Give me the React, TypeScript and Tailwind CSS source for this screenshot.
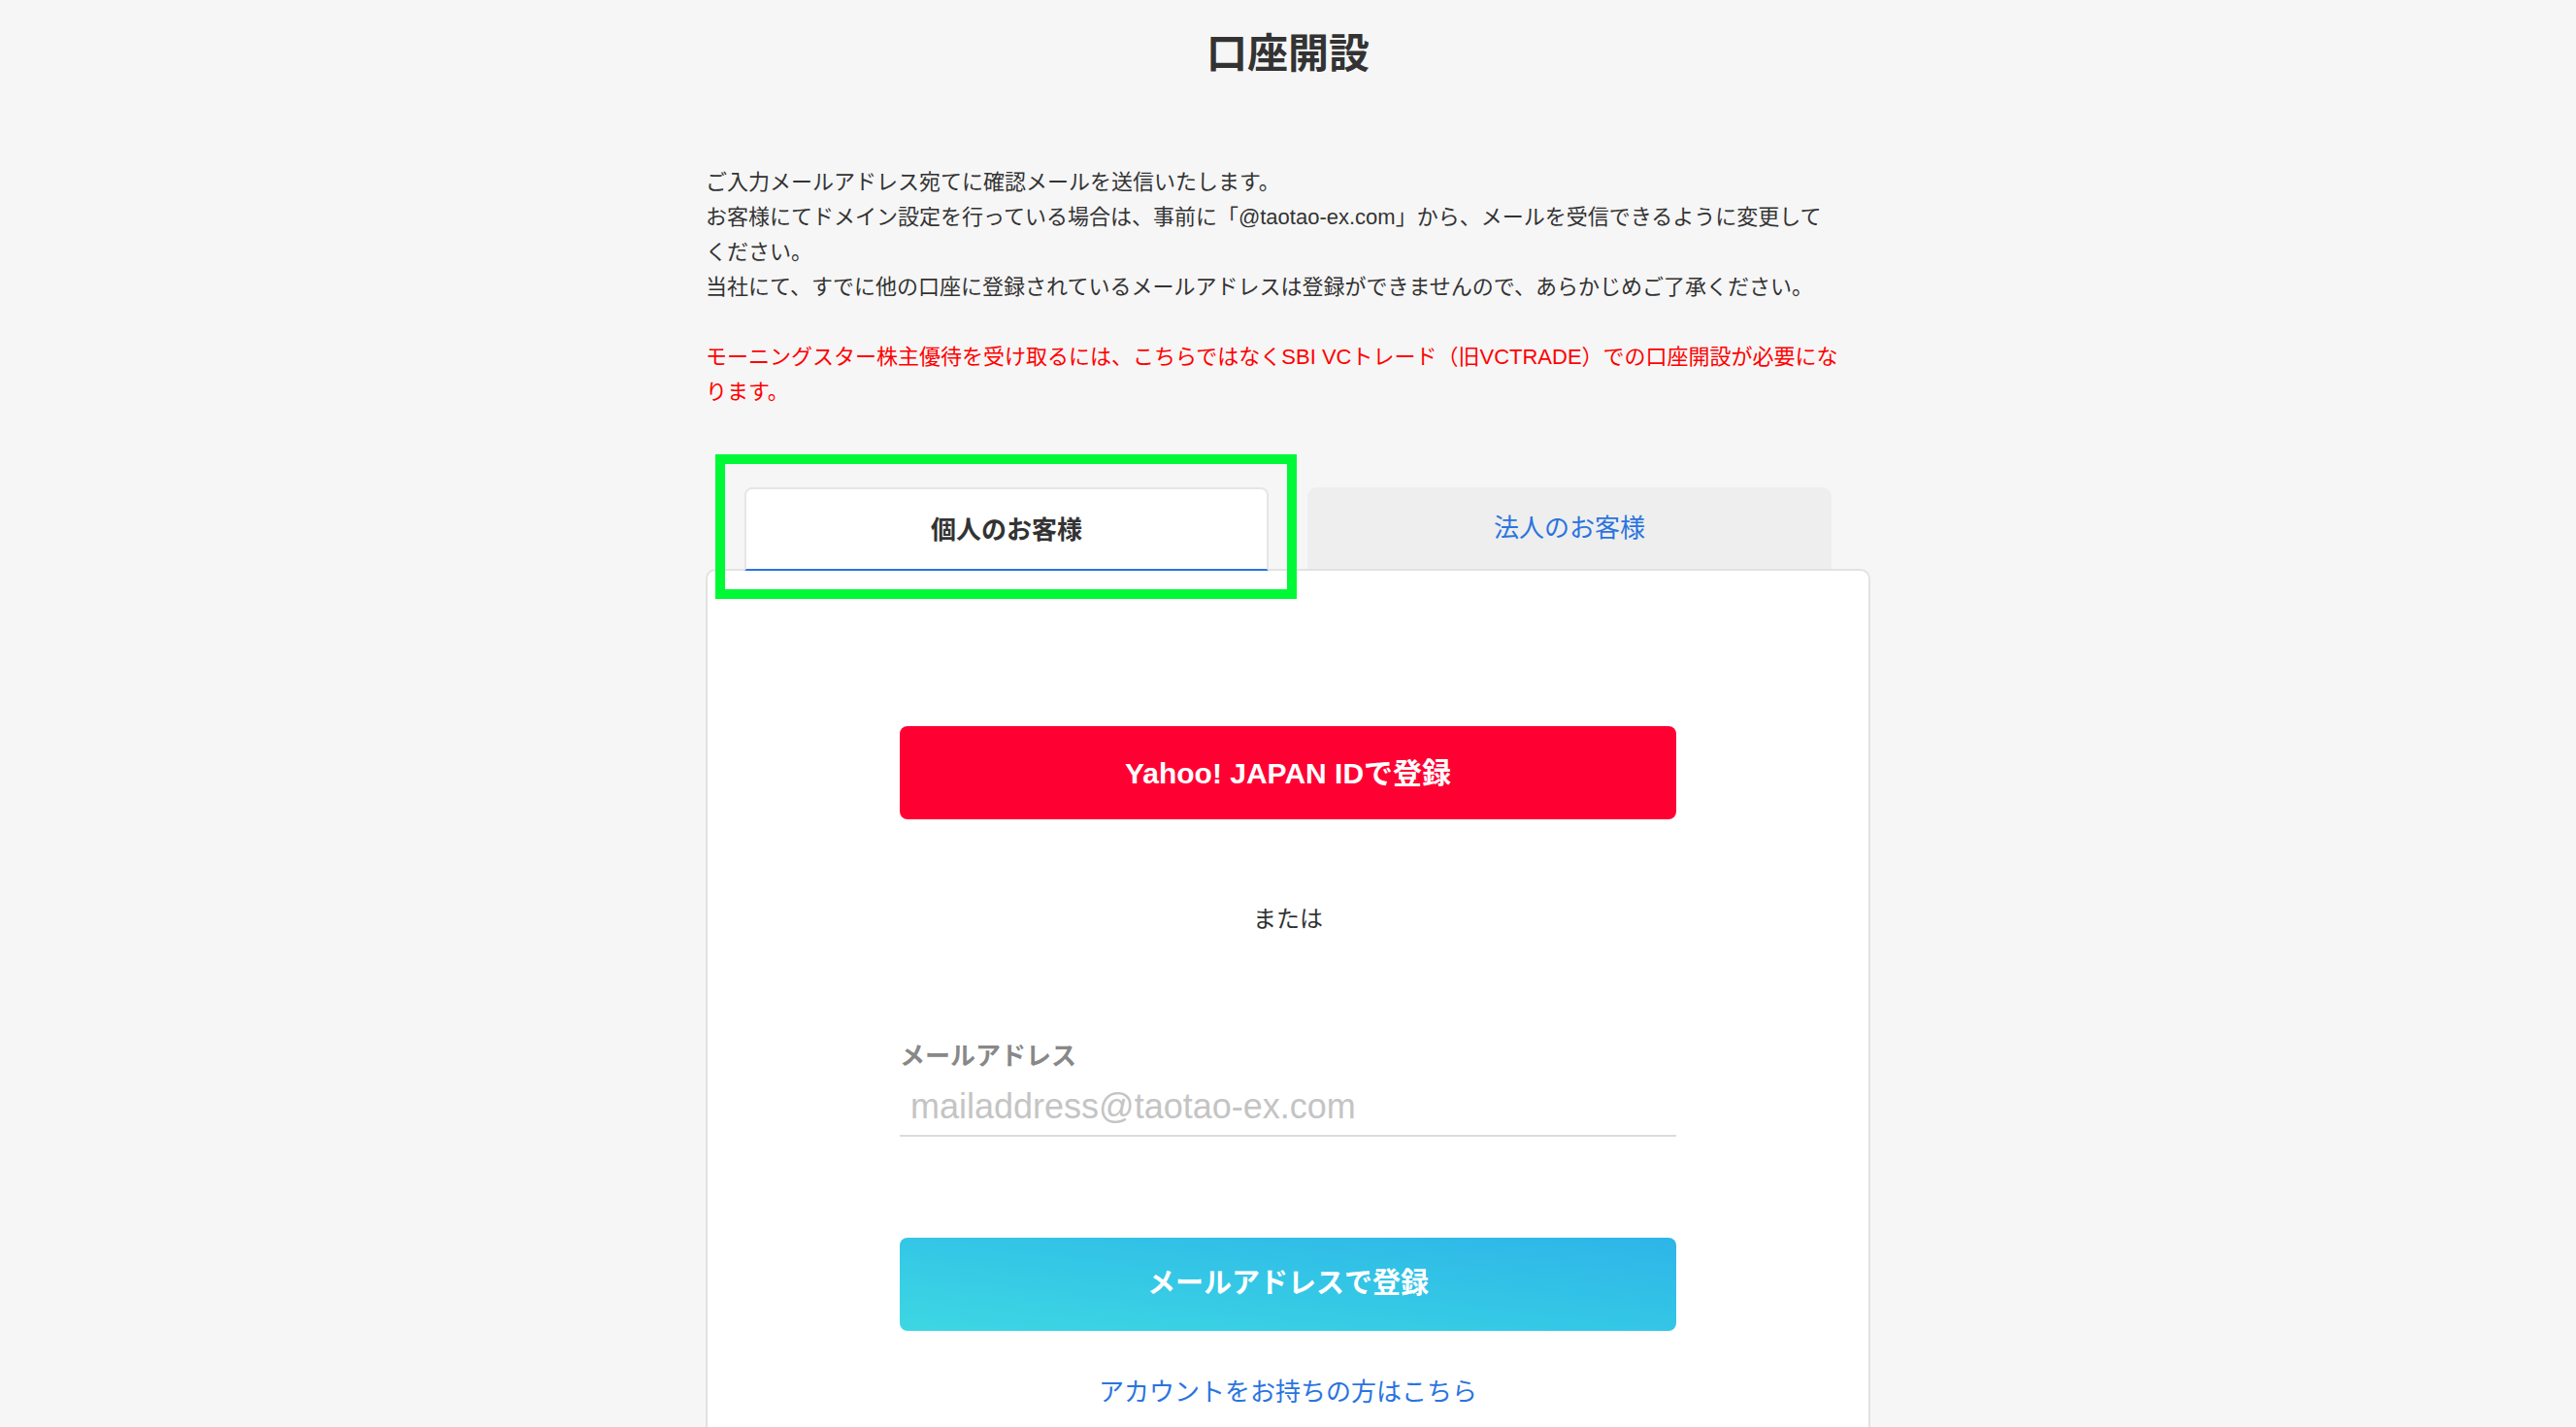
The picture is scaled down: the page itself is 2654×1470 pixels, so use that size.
import { useState } from "react";

const font = "font-['Liberation_Sans','Noto_Sans_CJK_JP',sans-serif]";

const App = () => {
  const [tab, setTab] = useState<"personal" | "corporate">("personal");
  const [email, setEmail] = useState("");

  return (
    <div className={`min-h-screen bg-[#f6f6f6] text-[#333] ${font}`}>
      <div className="w-[1200px] mx-auto pt-6">
        <h1 className="text-center text-[42px] leading-[64px] font-bold text-[#333]">
          口座開設
        </h1>

        <div className="mt-[82px] text-[22px] leading-[36px]">
          <p>
            ご入力メールアドレス宛てに確認メールを送信いたします。
            <br />
            お客様にてドメイン設定を行っている場合は、事前に「@taotao-ex.com」から、メールを受信できるように変更して
            <br />
            ください。
            <br />
            当社にて、すでに他の口座に登録されているメールアドレスは登録ができませんので、あらかじめご了承ください。
          </p>
          <p className="mt-9 text-[#ff0000]">
            モーニングスター株主優待を受け取るには、こちらではなくSBI VCトレード（旧VCTRADE）での口座開設が必要にな
            <br />
            ります。
          </p>
        </div>

        {/* Tabs */}
        <div className="relative z-10 mt-[80px] -mb-[2px] flex items-end gap-10 px-10">
          <button
            onClick={() => setTab("personal")}
            className={
              tab === "personal"
                ? "h-[86px] w-[540px] rounded-t-[8px] border-2 border-[#e6e6e6] border-b-[#2a74e0] bg-white pt-[2px] text-[26px] font-bold text-[#333]"
                : "h-[84px] w-[540px] self-start rounded-t-[10px] bg-[#eeeeee] text-[26px] text-[#2a74e0]"
            }
          >
            個人のお客様
          </button>
          <button
            onClick={() => setTab("corporate")}
            className={
              tab === "corporate"
                ? "h-[86px] w-[540px] rounded-t-[8px] border-2 border-[#e6e6e6] border-b-[#2a74e0] bg-white pt-[2px] text-[26px] font-bold text-[#333]"
                : "h-[84px] w-[540px] self-start rounded-t-[10px] bg-[#eeeeee] text-[26px] text-[#2a74e0]"
            }
          >
            法人のお客様
          </button>

          {/* highlight frame */}
          <div className="pointer-events-none absolute left-[10px] top-[-34px] h-[149px] w-[599px] border-[10px] border-[#00f936]" />
        </div>

        {/* Card */}
        <div className="rounded-t-[10px] border-2 border-[#e2e2e2] bg-white pt-[160px] pb-[200px]">
          <div className="mx-auto flex w-[800px] flex-col">
            <button className="h-[96px] w-full rounded-[8px] bg-[#ff0033] text-[30px] font-bold text-white">
              Yahoo! JAPAN IDで登録
            </button>

            <p className="mt-[85px] text-center text-[24px] leading-[36px] text-[#333]">
              または
            </p>

            <label className="mt-[105px] text-[26px] leading-[36px] font-bold text-[#888]">
              メールアドレス
            </label>
            <input
              type="email"
              value={email}
              onChange={(e) => setEmail(e.target.value)}
              placeholder="mailaddress@taotao-ex.com"
              className="h-[65px] w-full border-b-2 border-[#dcdcdc] bg-transparent px-[11px] pt-[4px] text-[36px] outline-none placeholder:text-[#c4c4c4]"
            />

            <button className="mt-[104px] h-[96px] w-full rounded-[8px] bg-linear-to-tr from-[#3dd7e3] to-[#2db5e8] text-[29px] font-bold text-white">
              メールアドレスで登録
            </button>

            <a
              href="#"
              className="mt-[45px] text-center text-[26px] leading-[36px] text-[#2a74e0]"
            >
              アカウントをお持ちの方はこちら
            </a>
          </div>
        </div>
      </div>
    </div>
  );
};

export default App;
